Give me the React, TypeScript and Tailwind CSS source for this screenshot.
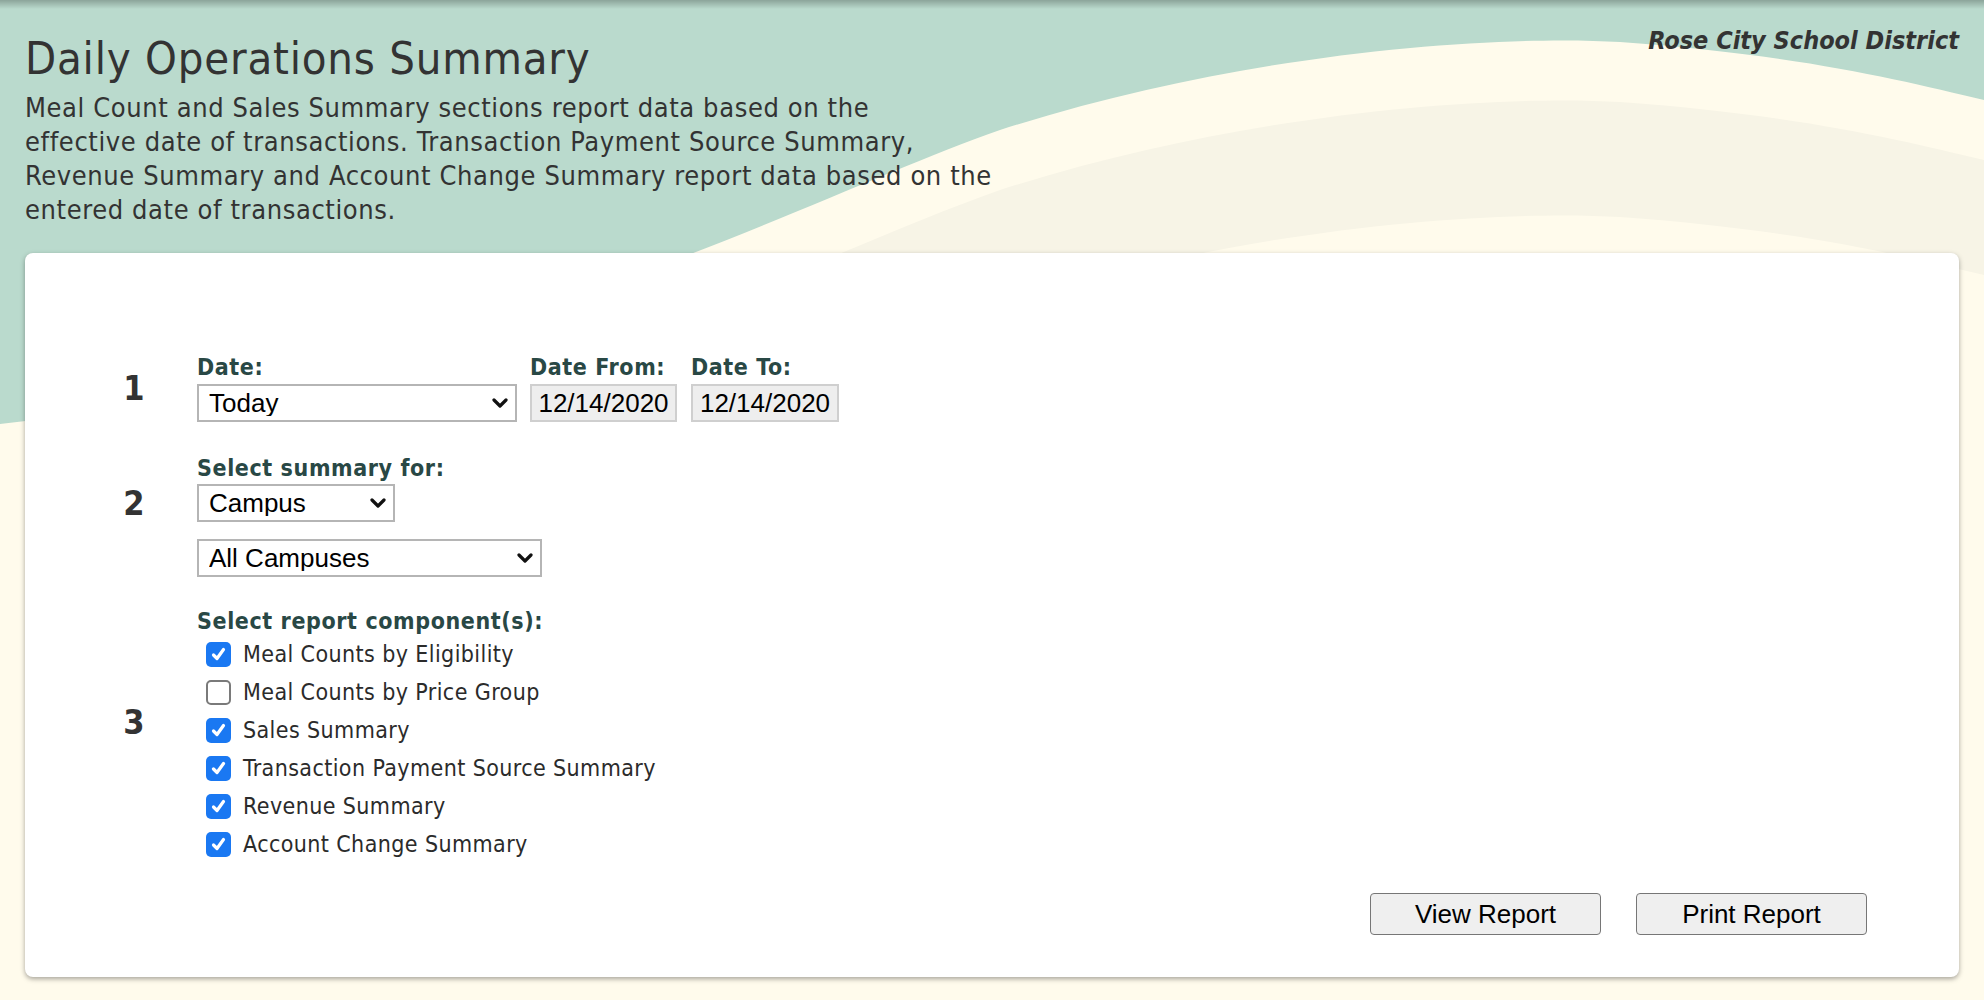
import React from "react";

const body = "font-['DejaVu_Sans_Condensed','DejaVu_Sans',sans-serif] [font-stretch:condensed]";
const arial = "font-['Liberation_Sans',Arial,sans-serif]";

const HUMP =
  "M0,424 C500,370 800,200 1000,130 C1250,50 1500,35 1620,42 C1800,55 1900,80 1984,100 V1000 H0 Z";

function Chevron() {
  return (
    <svg width="16" height="12" viewBox="0 0 16 12" className="pointer-events-none absolute right-[9px] top-1/2 -translate-y-1/2">
      <path d="M2 3 L8 9 L14 3" fill="none" stroke="#111" strokeWidth="3.2" strokeLinecap="round" strokeLinejoin="round" />
    </svg>
  );
}

function Select({ value, options, width }: { value: string; options: string[]; width: string }) {
  return (
    <div className={`relative ${width}`}>
      <select
        defaultValue={value}
        className={`${arial} h-[38px] w-full appearance-none border-2 border-[#b5b5b5] bg-white pl-[10px] text-[26px] leading-none text-black outline-none`}
      >
        {options.map((o) => (
          <option key={o}>{o}</option>
        ))}
      </select>
      <Chevron />
    </div>
  );
}

function Label({ children }: { children: React.ReactNode }) {
  return (
    <div className={`${body} h-[28px] text-[23px] font-bold leading-[28px] tracking-[0.6px] text-[#294845]`}>{children}</div>
  );
}

function Check({ checked, label }: { checked: boolean; label: string }) {
  return (
    <label className="flex h-[38px] items-center">
      <span
        className={`ml-[9px] flex h-[25px] w-[25px] items-center justify-center rounded-[5px] ${
          checked ? "bg-[#1a78f2]" : "border-2 border-[#7a7a7a] bg-white"
        }`}
      >
        {checked && (
          <svg width="17" height="17" viewBox="0 0 17 17">
            <path d="M3.5 9 L7 12.5 L13.5 3.5" fill="none" stroke="#fff" strokeWidth="3.2" strokeLinecap="round" strokeLinejoin="round" />
          </svg>
        )}
      </span>
      <span className={`${body} ml-[12px] text-[23px] leading-none tracking-[0.4px] text-[#2b2b2b]`}>{label}</span>
    </label>
  );
}

function Step({ n, shift, children }: { n: number; shift: string; children: React.ReactNode }) {
  return (
    <div className="flex items-center">
      <div className={`${body} w-[72px] text-center text-[34px] font-bold leading-none text-[#333] ${shift}`}>{n}</div>
      <div className="ml-[27px]">{children}</div>
    </div>
  );
}

export default function App() {
  const components = [
    { label: "Meal Counts by Eligibility", checked: true },
    { label: "Meal Counts by Price Group", checked: false },
    { label: "Sales Summary", checked: true },
    { label: "Transaction Payment Source Summary", checked: true },
    { label: "Revenue Summary", checked: true },
    { label: "Account Change Summary", checked: true },
  ];

  return (
    <div className="relative h-[1000px] w-full overflow-hidden bg-[#badacd]">
      <svg className="absolute left-0 top-0" width="1984" height="1000" viewBox="0 0 1984 1000">
        <defs>
          <clipPath id="band">
            <rect x="200" y="0" width="1784" height="1000" />
          </clipPath>
        </defs>
        <path d={HUMP} fill="#fffbec" />
        <g clipPath="url(#band)">
          <path d={HUMP} fill="#f7f4e6" transform="translate(0 60)" />
          <path d={HUMP} fill="#fffbec" transform="translate(0 175)" />
        </g>
      </svg>
      <div className="absolute left-0 right-0 top-0 h-[9px] bg-gradient-to-b from-black/25 to-transparent" />

      <div className="relative px-[25px]">
        <div className="flex justify-between">
          <div className="pt-[33px]">
            <h1 className={`${body} text-[45px] font-normal leading-[52px] tracking-[0.8px] text-[#333]`}>
              Daily Operations Summary
            </h1>
            <p className={`${body} mt-[6px] text-[27px] leading-[34px] tracking-[0.6px] text-[#333]`}>
              Meal Count and Sales Summary sections report data based on the
              <br />
              effective date of transactions. Transaction Payment Source Summary,
              <br />
              Revenue Summary and Account Change Summary report data based on the
              <br />
              entered date of transactions.
            </p>
          </div>
          <div className={`${body} pt-[25px] text-[25px] font-bold italic leading-[32px] text-[#333]`}>
            Rose City School District
          </div>
        </div>

        <div className="mt-[26px] rounded-[8px] bg-white pb-[42px] pl-[73px] pr-[92px] pt-[100px] shadow-[0_2px_5px_rgba(0,0,0,0.35)]">
          <Step n={1} shift="">
            <div className="flex">
              <div>
                <Label>Date:</Label>
                <div className="mt-[3px]">
                  <Select value="Today" options={["Today", "Yesterday", "This Week", "Custom"]} width="w-[320px]" />
                </div>
              </div>
              <div className="ml-[13px]">
                <Label>Date From:</Label>
                <div className={`${arial} mt-[3px] flex h-[38px] w-[147px] items-center justify-center border-2 border-[#cfcfcf] bg-[#eeeeee] text-[26px] text-black`}>
                  12/14/2020
                </div>
              </div>
              <div className="ml-[14px]">
                <Label>Date To:</Label>
                <div className={`${arial} mt-[3px] flex h-[38px] w-[148px] items-center justify-center border-2 border-[#cfcfcf] bg-[#eeeeee] text-[26px] text-black`}>
                  12/14/2020
                </div>
              </div>
            </div>
          </Step>

          <div className="mt-[32px]">
            <Step n={2} shift="mb-[26px]">
              <Label>Select summary for:</Label>
              <div className="mt-[2px]">
                <Select value="Campus" options={["Campus", "District"]} width="w-[198px]" />
              </div>
              <div className="mt-[17px]">
                <Select value="All Campuses" options={["All Campuses"]} width="w-[345px]" />
              </div>
            </Step>
          </div>

          <div className="mt-[30px]">
            <Step n={3} shift="mb-[26px]">
              <Label>Select report component(s):</Label>
              <div>
                {components.map((c) => (
                  <Check key={c.label} checked={c.checked} label={c.label} />
                ))}
              </div>
            </Step>
          </div>

          <div className="mt-[30px] flex justify-end gap-[35px]">
            <button className={`${arial} h-[42px] w-[231px] rounded-[4px] border border-[#767676] bg-[#efefef] text-[26px] text-black`}>
              View Report
            </button>
            <button className={`${arial} h-[42px] w-[231px] rounded-[4px] border border-[#767676] bg-[#efefef] text-[26px] text-black`}>
              Print Report
            </button>
          </div>
        </div>
      </div>
    </div>
  );
}
